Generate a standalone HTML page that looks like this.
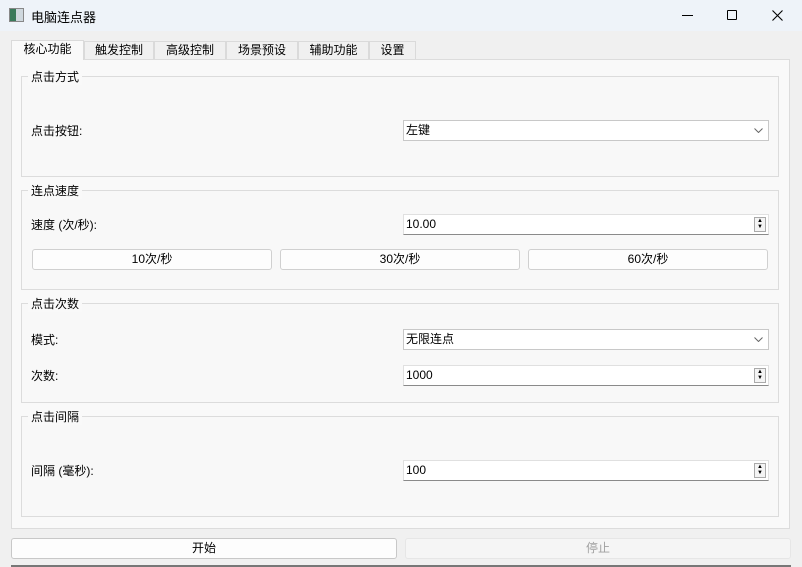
<!DOCTYPE html>
<html><head><meta charset="utf-8"><style>
*{box-sizing:border-box;margin:0;padding:0}
body{width:802px;height:567px;overflow:hidden;background:#f0f0f0;font-family:"Liberation Sans","Noto Sans CJK SC",sans-serif;font-size:12px;color:#000;position:relative}
.a{position:absolute}
.title{left:0;top:0;width:802px;height:31px;background:#eef3f9}
.tab{top:41px;height:18px;border:1px solid #dadada;border-bottom:none;background:#f0f0f0;text-align:center;line-height:17px;font-size:12px}
.tab.sel{background:#f9f9f9;top:40px;height:20px}
.panel{left:11px;top:59px;width:779px;height:470px;background:#f9f9f9;border:1px solid #dcdcdc}
.grp{left:21px;width:758px;border:1px solid #dcdcdc;background:#f8f8f8}
.gt{background:#f9f9f9;padding:0 3px;font-size:12px}
.inp{left:403px;width:366px;height:21px;background:#fff;border:1px solid #e0e0e0;border-bottom:1px solid #8a8a8a;padding-left:2px;line-height:19px}
.cmb{border:1px solid #c8c8c8}
.spin{position:absolute;right:2px;top:2px;width:12px;height:15px;border:1px solid #aaa;background:#f4f4f4;font-size:6px;line-height:6px;text-align:center}
.btn{top:249px;height:21px;background:#fdfdfd;border:1px solid #d0d0d0;border-radius:3px;text-align:center;line-height:19px}
.chev{position:absolute;right:5px;top:7px}
</style></head><body>
<div class="a title"></div>
<div class="a" style="left:9px;top:8px;width:15px;height:14px;border:1px solid #888;background:linear-gradient(90deg,#3a7a5a 0 45%,#cfd8de 45%)"></div>
<div class="a" style="left:31px;top:7px;font-size:13px">电脑连点器</div>
<div class="a" style="left:682px;top:15px;width:11px;height:1px;background:#000"></div>
<div class="a" style="left:727px;top:10px;width:10px;height:10px;border:1px solid #000;border-radius:1px"></div>
<svg class="a" style="left:772px;top:10px" width="11" height="11"><path d="M0.5 0.5L10.5 10.5M10.5 0.5L0.5 10.5" stroke="#000" stroke-width="1.1"/></svg>
<div class="a panel"></div>
<div class="a tab sel" style="left:11px;width:73px">核心功能</div>
<div class="a tab" style="left:84px;width:70px">触发控制</div>
<div class="a tab" style="left:154px;width:72px">高级控制</div>
<div class="a tab" style="left:226px;width:72px">场景预设</div>
<div class="a tab" style="left:298px;width:71px">辅助功能</div>
<div class="a tab" style="left:369px;width:47px">设置</div>

<div class="a grp" style="top:76px;height:101px"></div>
<div class="a gt" style="left:28px;top:68px">点击方式</div>
<div class="a" style="left:31px;top:122px">点击按钮:</div>
<div class="a inp cmb" style="top:120px">左键<svg class="chev" width="9" height="5"><path d="M0.5 0.5L4.5 4.5L8.5 0.5" stroke="#666" fill="none"/></svg></div>

<div class="a grp" style="top:190px;height:100px"></div>
<div class="a gt" style="left:28px;top:182px">连点速度</div>
<div class="a" style="left:31px;top:216px">速度 (次/秒):</div>
<div class="a inp" style="top:214px">10.00<div class="spin">▲<br>▼</div></div>
<div class="a btn" style="left:32px;width:240px">10次/秒</div>
<div class="a btn" style="left:280px;width:240px">30次/秒</div>
<div class="a btn" style="left:528px;width:240px">60次/秒</div>

<div class="a grp" style="top:303px;height:100px"></div>
<div class="a gt" style="left:28px;top:295px">点击次数</div>
<div class="a" style="left:31px;top:331px">模式:</div>
<div class="a inp cmb" style="top:329px">无限连点<svg class="chev" width="9" height="5"><path d="M0.5 0.5L4.5 4.5L8.5 0.5" stroke="#666" fill="none"/></svg></div>
<div class="a" style="left:31px;top:367px">次数:</div>
<div class="a inp" style="top:365px">1000<div class="spin">▲<br>▼</div></div>

<div class="a grp" style="top:416px;height:101px"></div>
<div class="a gt" style="left:28px;top:408px">点击间隔</div>
<div class="a" style="left:31px;top:462px">间隔 (毫秒):</div>
<div class="a inp" style="top:460px">100<div class="spin">▲<br>▼</div></div>

<div class="a" style="left:11px;top:538px;width:386px;height:21px;background:#fdfdfd;border:1px solid #c8c8c8;border-radius:3px;text-align:center;line-height:19px">开始</div>
<div class="a" style="left:405px;top:538px;width:386px;height:21px;background:#f5f5f5;border:1px solid #e6e6e6;border-radius:3px;text-align:center;line-height:19px;color:#a0a0a0">停止</div>
<div class="a" style="left:11px;top:565px;width:780px;height:2px;background:#777"></div>
</body></html>
